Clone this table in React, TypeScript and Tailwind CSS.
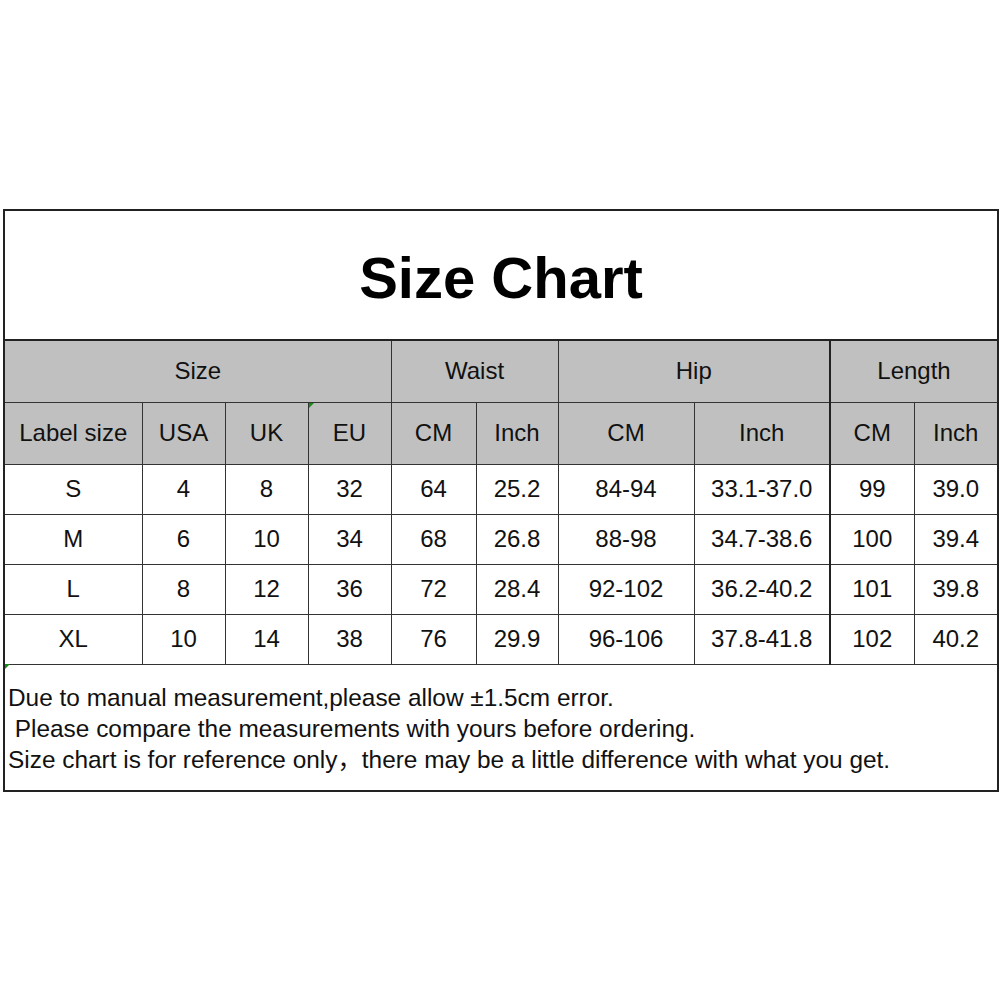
const rows = [
  ["S", "4", "8", "32", "64", "25.2", "84-94", "33.1-37.0", "99", "39.0"],
  ["M", "6", "10", "34", "68", "26.8", "88-98", "34.7-38.6", "100", "39.4"],
  ["L", "8", "12", "36", "72", "28.4", "92-102", "36.2-40.2", "101", "39.8"],
  ["XL", "10", "14", "38", "76", "29.9", "96-106", "37.8-41.8", "102", "40.2"],
]

const widths = ["w-[138px]", "w-[83px]", "w-[83px]", "w-[83px]", "w-[85px]", "w-[82px]", "w-[136px]", "w-[136px]", "w-[84px]", "w-[84px]"]

const subHeads = ["Label size", "USA", "UK", "EU", "CM", "Inch", "CM", "Inch", "CM", "Inch"]

const cell = "border border-[#333] text-center align-middle p-0"

export default function App() {
  return (
    <div className="w-[1001px] h-[1001px] bg-white pt-[209px] pl-[3px] font-['Liberation_Sans','Noto_Sans_CJK_SC',sans-serif] text-[24px] text-[#111]">
      <table className="table-fixed border-collapse border-2 border-[#222] w-[995px]">
        <colgroup>
          {widths.map((w, i) => (
            <col key={i} className={w} />
          ))}
        </colgroup>
        <tbody>
          <tr className="h-[130px]">
            <td colSpan={10} className="border-2 border-[#222] text-center align-middle p-0 pt-[4px]">
              <span className="text-[58px] font-bold text-black">Size Chart</span>
            </td>
          </tr>
          <tr className="h-[62px] bg-[#c0c0c0]">
            <td colSpan={4} className={cell}>Size</td>
            <td colSpan={2} className={cell}>Waist</td>
            <td colSpan={2} className={cell + " border-r-2 border-r-[#222]"}>Hip</td>
            <td colSpan={2} className={cell}>Length</td>
          </tr>
          <tr className="h-[62px] bg-[#c0c0c0]">
            {subHeads.map((h, i) => (
              <td key={i} className={cell + (i === 7 ? " border-r-2 border-r-[#222]" : "") + (i === 3 ? " relative" : "")}>
                {i === 3 && (
                  <span className="absolute left-0 top-0 w-0 h-0 border-t-[5px] border-r-[5px] border-t-[#1a8a1a] border-r-transparent" />
                )}
                {h}
              </td>
            ))}
          </tr>
          {rows.map((r, ri) => (
            <tr key={ri} className="h-[50px]">
              {r.map((v, i) => (
                <td key={i} className={cell + (i === 7 ? " border-r-2 border-r-[#222]" : "") + (ri === 3 && i === 0 ? " relative" : "")}>
                  {v}
                  {ri === 3 && i === 0 && (
                    <span className="absolute left-0 bottom-[-5px] w-0 h-0 border-t-[5px] border-r-[5px] border-t-[#1a8a1a] border-r-transparent" />
                  )}
                </td>
              ))}
            </tr>
          ))}
          <tr className="h-[127px]">
            <td colSpan={10} className="border border-[#333] align-top pt-[17px] pl-[3px] text-[24.4px] leading-[31px] whitespace-pre text-left">
              <div>Due to manual measurement,please allow ±1.5cm error.</div>
              <div> Please compare the measurements with yours before ordering.</div>
              <div>Size chart is for reference only，there may be a little difference with what you get.</div>
            </td>
          </tr>
        </tbody>
      </table>
    </div>
  )
}
